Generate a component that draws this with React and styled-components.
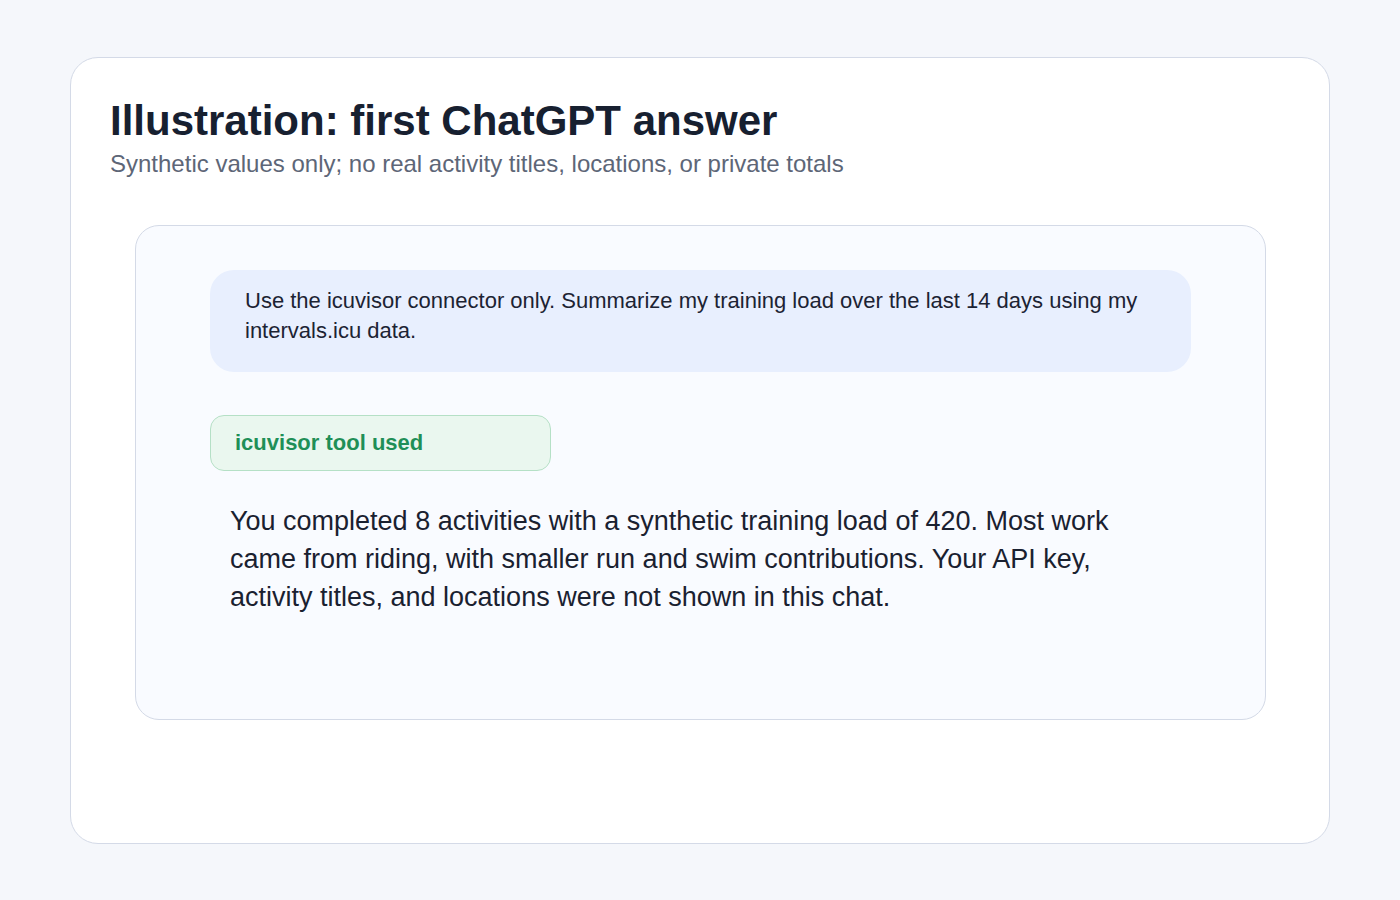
import React from "react";
import styled, { createGlobalStyle } from "styled-components";

const Global = createGlobalStyle`
  html, body { margin: 0; padding: 0; background: #f5f7fb; }
  body { font-family: "Liberation Sans", Arial, sans-serif; }
  * { box-sizing: border-box; }
`;

const Page = styled.div`
  width: 1400px;
  height: 900px;
  padding: 57px 70px 56px;
  background: #f5f7fb;
`;

const Card = styled.section`
  background: #ffffff;
  border: 1.5px solid #d4dae7;
  border-radius: 28px;
  height: 787px;
  padding: 39px 63px 0 39px;
  display: flex;
  flex-direction: column;
`;

const Title = styled.h1`
  margin: 0;
  font-size: 42px;
  line-height: 48px;
  font-weight: 700;
  color: #172030;
`;

const Subtitle = styled.p`
  margin: 4px 0 0;
  font-size: 24px;
  line-height: 30px;
  color: #5d6677;
`;

const Chat = styled.div`
  margin: 46px 0 0 25px;
  background: #f9fbff;
  border: 1.5px solid #d4dae7;
  border-radius: 24px;
  height: 495px;
  padding: 44px 74px 0 74px;
  display: flex;
  flex-direction: column;
  align-items: flex-start;
`;

const UserBubble = styled.div`
  align-self: stretch;
  background: #e8effe;
  border-radius: 24px;
  padding: 16px 35px 26px;
  font-size: 22px;
  line-height: 30px;
  color: #1c2333;
`;

const ToolBadge = styled.div`
  margin-top: 43px;
  width: 341px;
  height: 56px;
  display: flex;
  align-items: center;
  padding-left: 24px;
  background: #eaf7ef;
  border: 1.5px solid #b5e0c6;
  border-radius: 14px;
  font-size: 22px;
  font-weight: 700;
  color: #1f8f57;
`;

const Answer = styled.p`
  margin: 31px 0 0 20px;
  max-width: 900px;
  font-size: 27px;
  line-height: 38px;
  color: #1a2130;
`;

export default function App() {
  return (
    <>
      <Global />
      <Page>
        <Card>
          <Title>Illustration: first ChatGPT answer</Title>
          <Subtitle>
            Synthetic values only; no real activity titles, locations, or private totals
          </Subtitle>
          <Chat>
            <UserBubble>
              Use the icuvisor connector only. Summarize my training load over the last 14 days using my
              intervals.icu data.
            </UserBubble>
            <ToolBadge>icuvisor tool used</ToolBadge>
            <Answer>
              You completed 8 activities with a synthetic training load of 420. Most work came from
              riding, with smaller run and swim contributions. Your API key, activity titles, and
              locations were not shown in this chat.
            </Answer>
          </Chat>
        </Card>
      </Page>
    </>
  );
}
